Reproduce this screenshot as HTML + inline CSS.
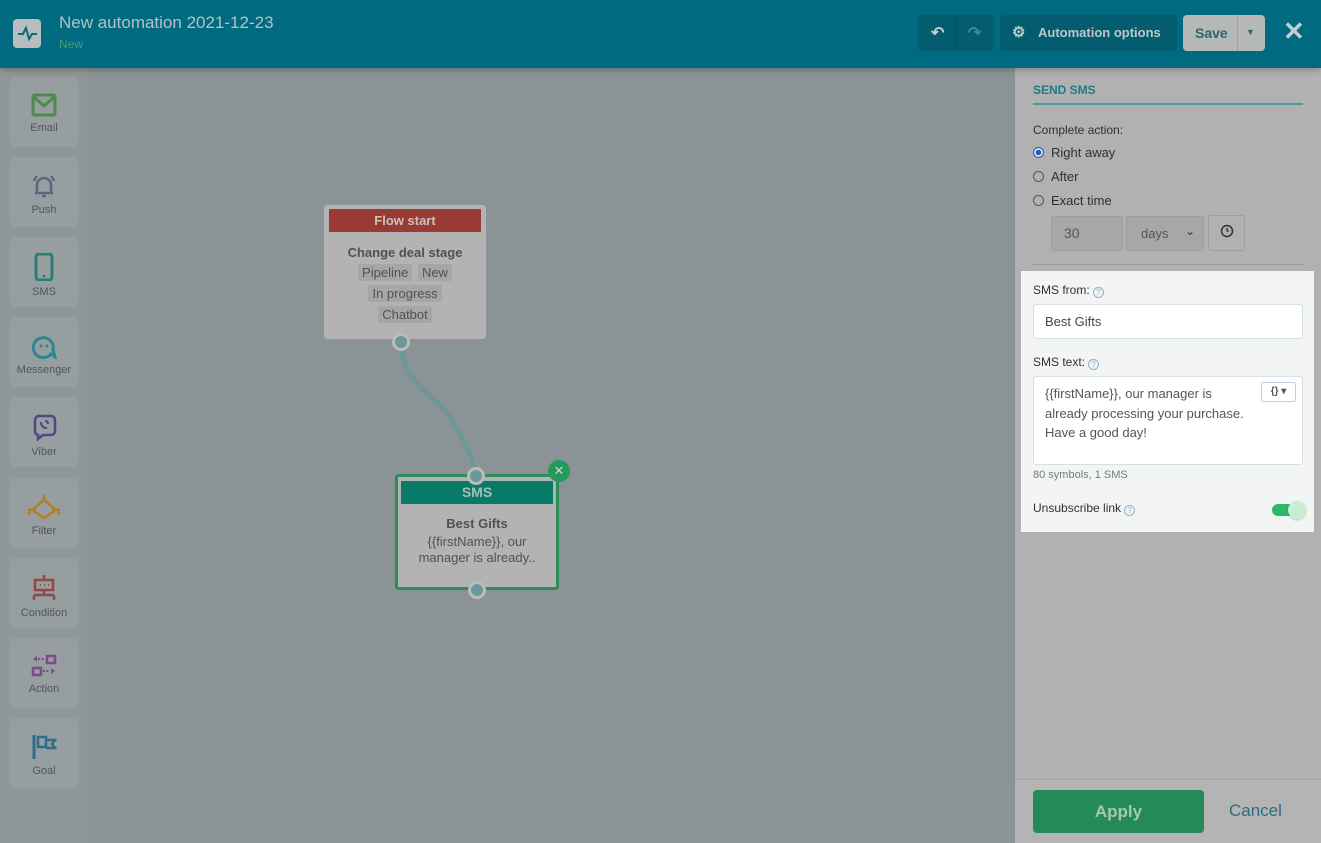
<!DOCTYPE html>
<html><head><meta charset="utf-8"><style>
*{box-sizing:border-box;margin:0;padding:0}
body{width:1321px;height:843px;overflow:hidden;font-family:"Liberation Sans",sans-serif;background:#8a9396;position:relative}
.hdr{position:absolute;left:0;top:0;width:1321px;height:68px;background:#006b80;box-shadow:0 2px 6px rgba(0,0,0,.25);z-index:5}
.logo{position:absolute;left:13px;top:19px;width:28px;height:29px;background:#b9bdbd;border-radius:4px}
.ttl{position:absolute;left:59px;top:13px;font-size:17px;color:#b7c1c3}
.sub{position:absolute;left:59px;top:37px;font-size:12px;color:#4c9a6f}
.btn{position:absolute;top:15px;height:36px;border-radius:4px;background:#035d6e}
.side{position:absolute;left:0;top:68px;width:90px;height:775px;background:#8f9799;border-right:1px solid #868e90}
.tile{position:absolute;left:10px;width:68px;height:70px;background:#979ea0;border-radius:5px;text-align:center;font-size:11px;color:#4f5658}
.tile svg{display:block;margin:16px auto 5px}
.node{position:absolute;background:#b3b3b3;border-radius:3px}
.row{height:21px;line-height:21px}
.tag{display:inline-block;background:#a6a6a6;border-radius:2px;padding:0 4px;margin:0 1px;line-height:17px}
.panel{position:absolute;left:1015px;top:68px;width:306px;height:775px;background:#b0b1b0}
.lbl{font-size:12px;color:#2e3132}
.rad{position:absolute;left:1033px;font-size:13px;color:#2e3132}
.rad i{display:inline-block;width:11px;height:11px;border:1px solid #555;border-radius:50%;vertical-align:-1px;margin-right:7px}
.q{display:inline-block;width:11px;height:11px;border:1.3px solid #8fb3c4;border-radius:50%;font-size:8px;color:#8fb3c4;text-align:center;line-height:9px;vertical-align:-1px;margin-left:3px}
</style></head><body>
<div class="hdr">
 <div class="logo"><svg width="28" height="29"><path d="M5 15h5l3-6 3 11 3-5h5" stroke="#0b6b7e" stroke-width="2" fill="none"/></svg></div>
 <div class="ttl">New automation 2021-12-23</div>
 <div class="sub">New</div>
 <div class="btn" style="left:918px;width:76px"><span style="position:absolute;left:13px;top:8px;color:#c5cccd;font-size:16px;font-weight:bold">↶</span><span style="position:absolute;left:37px;top:0;width:1px;height:36px;background:#02505f"></span><span style="position:absolute;left:50px;top:8px;color:#4c8590;font-size:16px;font-weight:bold">↷</span></div>
 <div class="btn" style="left:1000px;width:177px;color:#bfc6c7;font-size:13px;font-weight:bold;line-height:36px"><span style="position:absolute;left:12px;font-size:15px">⚙</span><span style="position:absolute;left:38px">Automation options</span></div>
 <div style="position:absolute;left:1183px;top:15px;width:82px;height:36px;background:#b6b7b7;border-radius:4px;font-size:14px;font-weight:bold;color:#2b6673;line-height:36px"><span style="position:absolute;left:12px">Save</span><span style="position:absolute;left:54px;top:0;width:1px;height:36px;background:#a0a0a0"></span><span style="position:absolute;left:63px;top:-1px;font-size:9px">▼</span></div>
 <div style="position:absolute;left:1283px;top:16px;color:#c8cdce;font-size:26px;font-weight:bold">✕</div>
</div>
<div class="side">
 <div class="tile" style="top:9px"><svg width="26" height="24"><rect x="2" y="2" width="22" height="20" rx="2" fill="none" stroke="#4d8a50" stroke-width="3"/><path d="M3 4l10 9 10-9" fill="none" stroke="#4d8a50" stroke-width="3"/></svg>Email</div>
 <div class="tile" style="top:89px"><svg width="28" height="26"><path d="M7 20V12a7 7 0 0 1 14 0v8H5h18M12 23h4M4 8q1-3 3-5M24 8q-1-3-3-5" fill="none" stroke="#56687e" stroke-width="2.5"/></svg>Push</div>
 <div class="tile" style="top:169px"><svg width="20" height="28"><rect x="2" y="1" width="16" height="26" rx="3" fill="none" stroke="#287d76" stroke-width="3"/><circle cx="10" cy="23" r="1.3" fill="#287d76"/></svg>SMS</div>
 <div class="tile" style="top:249px"><svg width="26" height="26"><path d="M20 21A10 10 0 1 1 22 17L24 24Z" fill="none" stroke="#2c8593" stroke-width="3"/><circle cx="10" cy="13" r="1.5" fill="#2c8593"/><circle cx="16" cy="13" r="1.5" fill="#2c8593"/></svg>Messenger</div>
 <div class="tile" style="top:329px"><svg width="26" height="28"><path d="M6 3h14a4 4 0 0 1 4 4v11a4 4 0 0 1-4 4h-8l-5 4v-4a4 4 0 0 1-3-4V7a4 4 0 0 1 4-4z" fill="none" stroke="#4c4a80" stroke-width="2.5"/><path d="M10 9q0 6 6 6M14 8q3 0 3 3" fill="none" stroke="#4c4a80" stroke-width="2"/></svg>Viber</div>
 <div class="tile" style="top:410px"><svg width="40" height="26"><path d="M20 1v5M20 6L8 16M20 6l12 10M8 16l12 8 12-8M4 16h8M28 16h8M5 16v5M35 16v5" fill="none" stroke="#b0802a" stroke-width="2.5"/></svg>Filter</div>
 <div class="tile" style="top:490px"><svg width="28" height="28"><path d="M14 1v4" stroke="#8e4b43" stroke-width="2.5"/><rect x="5" y="6" width="18" height="10" fill="none" stroke="#8e4b43" stroke-width="2.5"/><path d="M10 11h1M14 11h1M18 11h1" stroke="#8e4b43" stroke-width="2"/><path d="M14 16v5M4 21h20M4 21v5M24 21v5" fill="none" stroke="#8e4b43" stroke-width="2.5"/></svg>Condition</div>
 <div class="tile" style="top:570px"><svg width="26" height="24"><rect x="16" y="2" width="8" height="7" fill="none" stroke="#7d4a8c" stroke-width="2.5"/><rect x="2" y="14" width="8" height="7" fill="none" stroke="#7d4a8c" stroke-width="2.5"/><path d="M2 5l4-3v6zM24 17l-4-3v6z" fill="#7d4a8c"/><path d="M7 5h7M12 17h7" stroke="#7d4a8c" stroke-width="2" stroke-dasharray="2 1.5"/></svg>Action</div>
 <div class="tile" style="top:650px"><svg width="26" height="26"><path d="M3 1v24" stroke="#2e6d8c" stroke-width="3"/><path d="M7 3h8v10H7zM15 6h9l-3 4 3 4h-9" fill="none" stroke="#2e6d8c" stroke-width="2.5"/></svg>Goal</div>
</div>
<svg style="position:absolute;left:0;top:0" width="1015" height="843"><path d="M401 342q0 30 30 55t45 75" fill="none" stroke="#6d9899" stroke-width="5"/></svg>
<div class="node" style="left:324px;top:205px;width:162px;height:134px;text-align:center;font-size:13px;color:#4e5253">
 <div style="margin:4px 5px 0;height:23px;background:#993a34;color:#c9c1c0;font-weight:bold;line-height:23px;border-radius:1px">Flow start</div>
 <div style="margin-top:13px;font-weight:bold;font-size:13px">Change deal stage</div>
 <div class="row" style="margin-top:2px"><span class="tag">Pipeline</span> <span class="tag">New</span></div>
 <div class="row"><span class="tag">In progress</span></div>
 <div class="row"><span class="tag">Chatbot</span></div>
</div>
<div style="position:absolute;left:392px;top:333px;width:18px;height:18px;border-radius:50%;background:#6d9899;border:3px solid #b9bcbc"></div>
<div class="node" style="left:395px;top:474px;width:164px;height:116px;border:3px solid #2e8c5b;text-align:center;color:#4e5253;font-size:13px">
 <div style="margin:4px 3px 0;height:23px;background:#087a68;color:#a8bdb7;font-weight:bold;line-height:23px;font-size:14px">SMS</div>
 <div style="margin-top:12px;font-weight:bold;font-size:13px">Best Gifts</div>
 <div style="margin-top:3px;line-height:16px">{{firstName}}, our<br>manager is already..</div>
</div>
<div style="position:absolute;left:467px;top:467px;width:18px;height:18px;border-radius:50%;background:#6d9899;border:3px solid #b9bcbc"></div>
<div style="position:absolute;left:468px;top:581px;width:18px;height:18px;border-radius:50%;background:#6d9899;border:3px solid #b9bcbc"></div>
<div style="position:absolute;left:548px;top:460px;width:22px;height:22px;border-radius:50%;background:#239a5b;color:#c8d6cf;text-align:center;line-height:22px;font-size:13px">✕</div>
<div class="panel">
 <div style="position:absolute;left:18px;top:15px;font-size:12px;font-weight:bold;color:#227a85">SEND SMS</div>
 <div style="position:absolute;left:18px;top:35px;width:270px;height:2px;background:#4e9aa0"></div>
 <div class="lbl" style="position:absolute;left:18px;top:55px">Complete action:</div>
 <div style="position:absolute;left:18px;top:196px;width:270px;height:1px;background:#9a9c9b"></div>
 <div style="position:absolute;left:0;top:711px;width:306px;height:64px;background:#b4b4b4;border-top:1px solid #a5a6a5"></div>
</div>
<div class="rad" style="top:145px"><i style="border-color:#1d5fb8;background:radial-gradient(#1d5fb8 40%,#dde 45%)"></i>Right away</div>
<div class="rad" style="top:169px"><i></i>After</div>
<div class="rad" style="top:193px"><i></i>Exact time</div>
<div style="position:absolute;left:1051px;top:216px;width:72px;height:35px;background:#a6a7a6;border:1px solid #9c9d9c;border-radius:3px;font-size:14px;color:#555;padding:8px 12px">30</div>
<div style="position:absolute;left:1126px;top:216px;width:78px;height:35px;background:#a6a7a6;border:1px solid #9c9d9c;border-radius:3px;font-size:13px;color:#555;padding:9px 14px">days <span style="position:absolute;right:8px;top:7px;font-size:12px;color:#333">⌄</span></div>
<div style="position:absolute;left:1208px;top:215px;width:37px;height:36px;border:1px solid #9c9d9c;border-radius:3px"><svg width="37" height="36"><circle cx="18" cy="15" r="5.5" fill="none" stroke="#333" stroke-width="1.5"/><path d="M18 12v3h2" stroke="#333" stroke-width="1.3" fill="none"/></svg></div>
<div style="position:absolute;left:1021px;top:271px;width:293px;height:261px;background:#f3f5f5">
 <div class="lbl" style="position:absolute;left:12px;top:12px">SMS from:<span class="q">?</span></div>
 <div style="position:absolute;left:12px;top:33px;width:270px;height:35px;background:#fff;border:1px solid #d5e0e2;border-radius:3px;font-size:13px;color:#444;padding:9px 11px">Best Gifts</div>
 <div class="lbl" style="position:absolute;left:12px;top:84px">SMS text:<span class="q">?</span></div>
 <div style="position:absolute;left:12px;top:105px;width:270px;height:89px;background:#fff;border:1px solid #d5e0e2;border-radius:3px;font-size:13px;color:#555;padding:7px 11px;line-height:19.5px">{{firstName}}, our manager is<br>already processing your purchase.<br>Have a good day!
  <div style="position:absolute;right:6px;top:5px;width:35px;height:20px;border:1px solid #ccd;border-radius:2px;font-size:10px;color:#555;text-align:center;line-height:18px;font-weight:bold">{} ▾</div></div>
 <div style="position:absolute;left:12px;top:198px;font-size:11px;color:#777">80 symbols, 1 SMS</div>
 <div class="lbl" style="position:absolute;left:12px;top:230px">Unsubscribe link<span class="q">?</span></div>
 <div style="position:absolute;left:251px;top:233px;width:28px;height:12px;background:#2bb86a;border-radius:6px"></div>
 <div style="position:absolute;left:267px;top:230px;width:18px;height:18px;background:#c8efd4;border-radius:50%;box-shadow:0 1px 2px rgba(0,0,0,.2)"></div>
</div>
<div style="position:absolute;left:1033px;top:790px;width:171px;height:43px;background:#248a58;border-radius:4px;color:#a6c7b4;font-size:17px;font-weight:bold;text-align:center;line-height:43px">Apply</div>
<div style="position:absolute;left:1229px;top:801px;font-size:17px;color:#2c6e80">Cancel</div>
</body></html>
